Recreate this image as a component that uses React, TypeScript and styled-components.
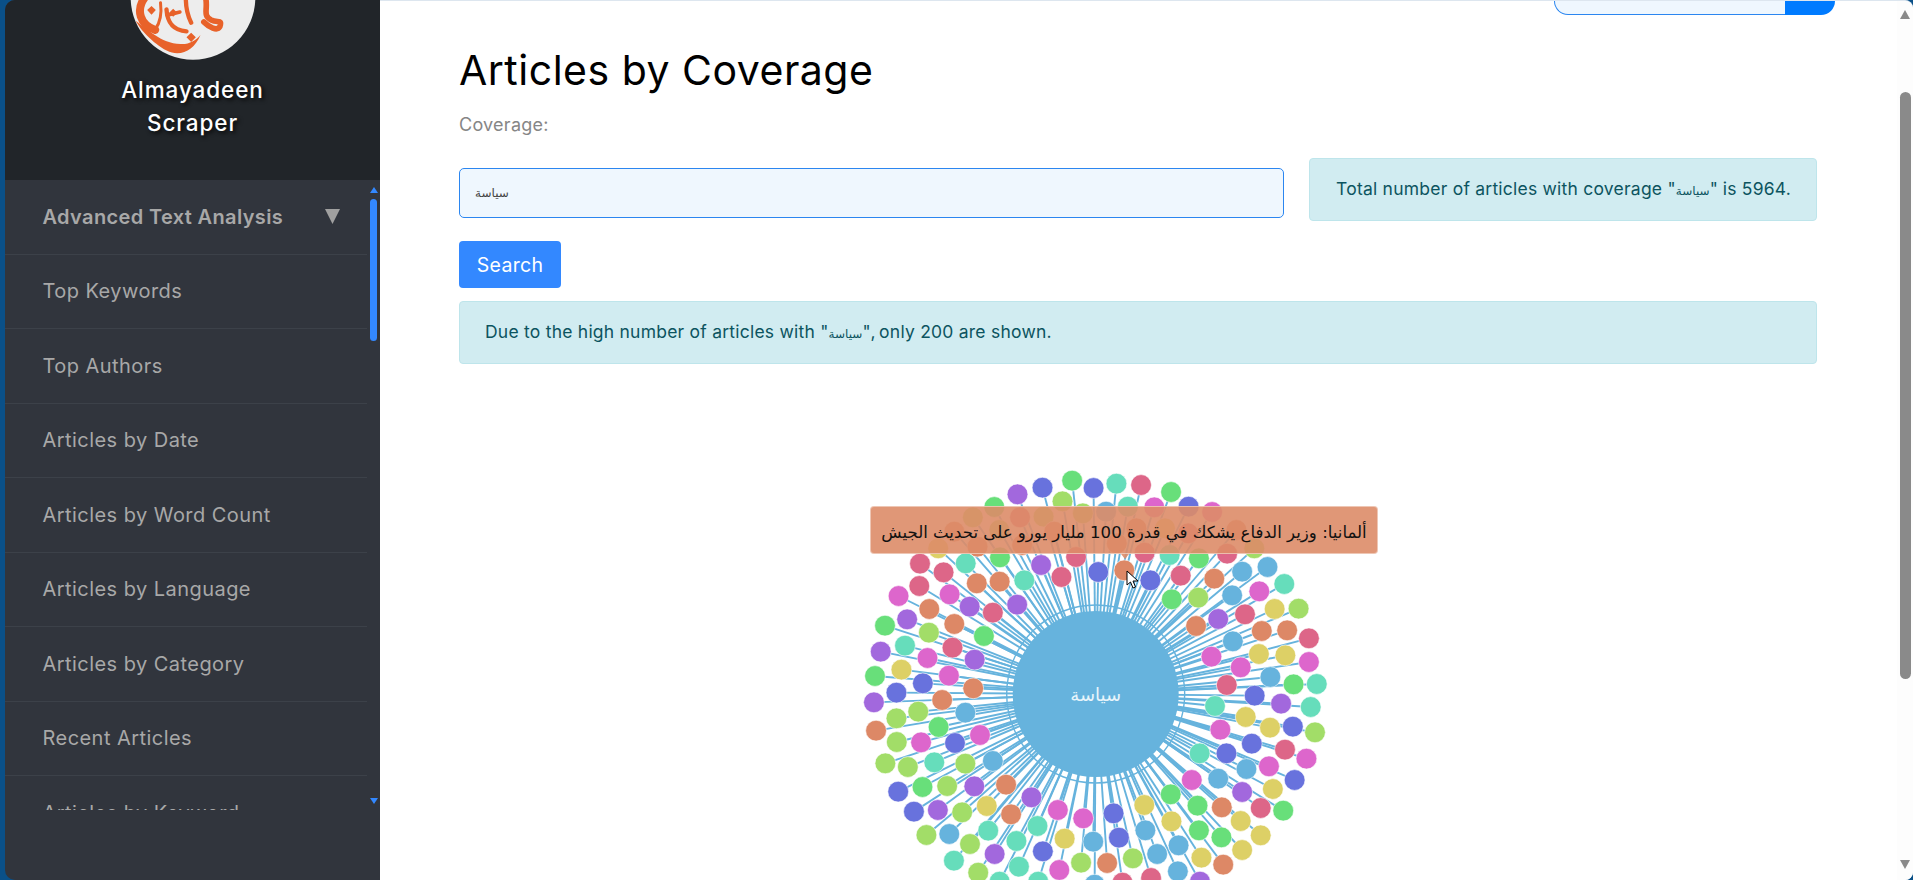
import React from "react";
import styled, { createGlobalStyle } from "styled-components";

const hues = {
  g: "#68df7a", b: "#6872dd", t: "#66ddbb", r: "#dd6688", p: "#a268dd",
  l: "#a2dd68", o: "#dd8866", y: "#ddd066", m: "#dd66cc", c: "#66b3dd",
};
type Hue = keyof typeof hues;

const raw = `650,62,g 567,83,b 497,103,p 710,84,b 774,71,t 843,75,r 927,96,g 623,124,l 806,140,t 880,142,m 976,140,b 1042,156,m 432,141,g
372,172,l 504,172,r 570,170,l 680,160,l 745,155,c 446,210,l 320,215,o 1110,210,o 830,205,o 910,205,y 975,220,r 600,215,o 275,265,y 385,260,o 510,255,o 775,250,o
853,278,r 661,291,r 923,285,t 1005,295,g 1084,281,r 1160,265,l 448,292,g 352,310,t 224,311,r 563,315,p 290,337,r 620,351,r 723,336,b 796,331,o 869,361,b 954,347,r 1048,356,o 1126,335,c 1197,321,c 1244,372,t
516,361,t 447,365,o 383,370,o 222,378,r 164,408,m 307,403,m 929,418,g 1003,413,l 1098,406,c 1174,394,m 250,447,o 363,440,p 496,434,p 428,458,r 1217,447,y 1284,446,l 1134,463,r 1059,477,p 997,498,o 1181,513,o 1252,511,o 1313,535,r
188,478,p 126,497,g 320,492,o 249,518,l 403,528,g 1100,544,c 182,557,t 114,575,p 315,563,r 245,594,m 377,599,p 1040,590,m 1122,622,m 1173,582,y 1247,586,y 1313,606,m 172,629,y 98,648,g 305,647,m 232,670,b 373,685,o 158,698,b 286,720,o 95,727,p
351,758,c 219,755,l 158,775,l 101,812,o 276,801,g 159,846,l 227,847,m 392,825,m 322,849,b 127,910,l 190,921,l 264,907,t 351,911,l 428,903,c 163,995,b 231,981,g 300,978,l 376,979,p 465,974,o 207,1055,b 274,1050,p 342,1057,l 411,1038,y 536,1012,p 479,1063,o
610,1050,m 681,1075,m 766,1060,b 852,1035,y 926,1003,g 928,1084,y 985,960,m 1001,1037,g 1069,1042,o 1059,956,c 1126,996,p 1122,1083,y 1178,1044,r 1241,1052,g 1178,1126,y 1126,1170,y 1068,1132,g 1005,1111,g 855,1111,c 781,1133,b 709,1145,c 629,1136,y 553,1098,t 494,1143,t 415,1112,t 306,1122,c 242,1125,l 364,1152,l 433,1182,p 319,1202,t 568,1174,b 501,1220,t 387,1238,l 447,1265,t 555,1265,t 614,1230,m 675,1208,l 748,1209,o 820,1195,l 888,1182,c 948,1156,c 1012,1193,y 1073,1214,o 946,1234,c 1008,1265,p 871,1254,r 791,1268,r 713,1274,c
1083,675,r 1205,651,c 1270,673,g 1335,672,t 1161,707,b 1235,731,p 1318,741,t 1050,738,t 1136,771,y 1204,803,y 1268,800,b 1330,817,l 1065,809,m 1153,851,b 1246,869,r 1306,896,m 1007,880,t 1082,880,b 1138,927,c 1201,919,m 1273,960,b 1212,987,y`;

const nodes = raw.split(/\s+/).map((s) => {
  const [x, y, h] = s.split(",");
  return { x: +x / 2.8, y: +y / 3, color: hues[h as Hue] };
});
const cx = 255.7;
const cy = 234;

const menu = ["Top Keywords", "Top Authors", "Articles by Date", "Articles by Word Count", "Articles by Language", "Articles by Category", "Recent Articles", "Articles by Keyword"];

const Global = createGlobalStyle`
  html, body { margin: 0; height: 100%; overflow: hidden; background: #0a5088; }
  #root { height: 100%; }
  * { box-sizing: border-box; }
`;
const Frame = styled.div`
  display: flex; height: 880px; width: 1913px; padding-left: 5px;
  background: #0a5088; font-family: Inter, "DejaVu Sans", sans-serif; overflow: hidden;
`;
const Sidebar = styled.aside`
  width: 375px; flex: none; display: flex; flex-direction: column;
  background: #31353d; border-radius: 10px 0 0 10px; overflow: hidden;
`;
const Brand = styled.header`
  height: 180px; flex: none; background: #212529; display: flex; flex-direction: column; align-items: center;
`;
const Logo = styled.svg`
  width: 150px; height: 60px; flex: none; display: block;
`;
const BrandName = styled.h2`
  margin: 13px 0 0; color: #fff; font-size: 22.5px; line-height: 33px; font-weight: 500; letter-spacing: .9px;
  text-align: center; text-shadow: 2px 2px 4px rgba(0,0,0,.9);
`;
const MenuArea = styled.div`
  flex: none; height: 630px; display: flex;
`;
const MenuList = styled.nav`
  width: 362px; flex: none; overflow: hidden; margin-right: 1.5px;
`;
const MenuItem = styled.div<{ $strong?: boolean }>`
  height: 74.5px; display: flex; align-items: center; justify-content: space-between;
  padding: 0 27px 0 37.5px; border-bottom: 1px solid #3c4149; color: #a8a8a8;
  font-size: 20px; font-weight: ${(p) => (p.$strong ? 600 : 400)}; letter-spacing: ${(p) => (p.$strong ? ".36px" : ".45px")};
`;
const Caret = styled.svg`
  width: 15px; height: 15px; margin-top: -1px;
`;
const Rail = styled.div`
  width: 10px; flex: none; display: flex; flex-direction: column; align-items: center; padding-top: 7px;
`;
const RailUp = styled.div`
  width: 0; height: 0; border: 4px solid transparent; border-top: 0; border-bottom: 6px solid #3388ff;
`;
const RailThumb = styled.div`
  width: 7px; height: 142px; margin-top: 6px; border-radius: 4px; background: #3388ff;
`;
const RailDown = styled.div`
  width: 0; height: 0; margin-top: 457px; border: 4px solid transparent; border-bottom: 0; border-top: 6px solid #3388ff;
`;
const Main = styled.main`
  flex: 1; min-width: 0; display: flex; background: #fff; border-top: 1px solid #dde6ef; border-radius: 0 8px 8px 0; overflow: hidden;
`;
const Content = styled.div`
  flex: 1; min-width: 0; display: flex; flex-direction: column;
`;
const TopBar = styled.div`
  height: 14px; flex: none; display: flex; justify-content: flex-end; padding-right: 62px;
`;
const TopInput = styled.div`
  width: 231px; background: #eff7fe; border: 1px solid #2b86f0; border-top: 0; border-right: 0; border-radius: 0 0 0 22px;
`;
const TopButton = styled.div`
  width: 50px; background: #007bff; border-radius: 0 0 24px 0;
`;
const Body = styled.div`
  padding: 0 80px 0 79px; display: flex; flex-direction: column;
`;
const Title = styled.h1`
  margin: 29px 0 0; font-size: 41px; line-height: 52px; font-weight: 400; color: #000; letter-spacing: .5px;
`;
const Label = styled.div`
  margin-top: 16px; font-size: 18px; line-height: 26px; color: #868686; letter-spacing: .25px;
`;
const SearchRow = styled.div`
  margin-top: 20px; display: flex; gap: 25px; height: 63px; align-items: flex-start;
`;
const Field = styled.div`
  margin-top: 10px; flex: 1; height: 50px; display: flex; align-items: center; padding-left: 15px;
  background: #eff7fe; border: 1px solid #2b86f0; border-radius: 5px; color: #444; font: 12px "DejaVu Sans", sans-serif;
`;
const Alert = styled.div`
  background: #d1ecf1; border: 1px solid #bee5eb; border-radius: 4px; color: #0c5460;
  font-size: 17.5px; letter-spacing: .23px; display: flex; align-items: center; padding-bottom: 2px;
`;
const TotalAlert = styled(Alert)`
  width: 508px; height: 63px; padding-left: 26px; flex: none;
`;
const NoticeAlert = styled(Alert)`
  height: 63px; padding-left: 25px; margin-top: 13px;
`;
const Ar = styled.span`
  font-family: "DejaVu Sans", sans-serif; font-size: 12px; letter-spacing: 0;
`;
const SearchButton = styled.button`
  margin-top: 20px; width: 102px; height: 47px; border: 0; border-radius: 4px; background: #3388ff; color: #fff;
  font: 400 19.5px Inter, sans-serif; letter-spacing: .3px;
`;
const Graph = styled.div`
  position: relative; width: 540px; height: 420px; margin: 96px 0 0 381px; flex: none;
`;
const GraphSvg = styled.svg`
  display: block; overflow: visible;
`;
const Tip = styled.div`
  position: absolute; left: 30px; top: 46px; width: 508px; height: 48px; border-radius: 4px; padding-top: 4px;
  background: rgba(221,140,104,.9); border: 1px solid rgba(255,255,255,.45); color: #111;
  display: flex; align-items: center; justify-content: center; white-space: nowrap;
  font: 16.6px "DejaVu Sans", sans-serif;
  &::after {
    content: ""; position: absolute; left: 250px; top: 47px; border: 4px solid transparent; border-bottom: 0;
    border-top: 5px solid rgba(221,140,104,.9);
  }
`;
const Cursor = styled.svg`
  position: absolute; left: 286px; top: 110px; width: 13px; height: 19px;
`;
const PageBar = styled.div`
  width: 16px; flex: none; background: #fdfdfd; display: flex; flex-direction: column; align-items: center; padding-top: 9px;
`;
const BarUp = styled.div`
  width: 0; height: 0; border: 5.5px solid transparent; border-top: 0; border-bottom: 9px solid #8a8a8a;
`;
const BarThumb = styled.div`
  width: 11px; height: 587px; margin-top: 73px; border-radius: 6px; background: #8a8a8a;
`;
const BarDown = styled.div`
  width: 0; height: 0; margin-top: 181px; border: 5.5px solid transparent; border-bottom: 0; border-top: 9px solid #8a8a8a;
`;

export default function App() {
  return (
    <Frame>
      <Global />
      <Sidebar>
        <Brand>
          <Logo viewBox="-7.5 0 450 180">
            <circle cx="217.5" cy="-7.5" r="187" fill="#ededed" />
            <g fill="none" stroke="#e8622a" strokeLinecap="round">
              <path d="M72 -6 C46 30 58 74 104 90" strokeWidth="24" />
              <path d="M104 88 C118 70 124 40 120 8" strokeWidth="9" />
              <path d="M138 28 C140 62 152 90 198 94" strokeWidth="13" />
              <path d="M140 46 L178 36" strokeWidth="11" />
              <path d="M196 -4 C196 30 204 52 212 68" strokeWidth="13" />
              <path d="M256 -4 C262 30 246 46 272 60 C292 70 306 56 298 80 C290 94 266 82 250 66" strokeWidth="17" />
            </g>
            <path d="M45 62 C80 85 120 130 180 132 C205 134 225 122 240 105 C225 140 200 160 170 160 C130 160 80 110 60 85 Z" fill="#e8622a" />
            <path d="M93 18 L106 30 L93 44 L80 30 Z M158 26 L170 38 L158 50 L146 38 Z M212 98 L226 112 L212 126 L198 112 Z" fill="#e8622a" />
          </Logo>
          <BrandName>Almayadeen<br />Scraper</BrandName>
        </Brand>
        <MenuArea>
          <MenuList>
            <MenuItem $strong>
              Advanced Text Analysis
              <Caret viewBox="0 0 15 15"><polygon points="0,0 15,0 7.5,15" fill="#a0a0a0" /></Caret>
            </MenuItem>
            {menu.map((m) => <MenuItem key={m}>{m}</MenuItem>)}
          </MenuList>
          <Rail>
            <RailUp />
            <RailThumb />
            <RailDown />
          </Rail>
        </MenuArea>
      </Sidebar>
      <Main>
        <Content>
          <TopBar><TopInput /><TopButton /></TopBar>
          <Body>
            <Title>Articles by Coverage</Title>
            <Label>Coverage:</Label>
            <SearchRow>
              <Field>سياسة</Field>
              <TotalAlert><span>Total number of articles with coverage "<Ar>سياسة</Ar>" is 5964.</span></TotalAlert>
            </SearchRow>
            <div><SearchButton>Search</SearchButton></div>
            <NoticeAlert><span>Due to the high number of articles with "<Ar>سياسة</Ar>", only 200 are shown.</span></NoticeAlert>
            <Graph>
              <GraphSvg width="540" height="420" viewBox="0 0 540 420">
                {nodes.map((n, i) => (
                  <line key={i} x1={cx} y1={cy} x2={n.x} y2={n.y} stroke="#66b3dd" strokeWidth="1.9" />
                ))}
                <circle cx={cx} cy={cy} r="89" fill="none" stroke="#66b3dd" strokeWidth="1.4" />
                <circle cx={cx} cy={cy} r="83" fill="#66b3dd" />
                <text x={cx} y={cy + 7} textAnchor="middle" fill="#e8f5fb" fontFamily="'DejaVu Sans', sans-serif" fontSize="18">سياسة</text>
                {nodes.map((n, i) => (
                  <circle key={i} cx={n.x} cy={n.y} r="10.4" fill={n.color} stroke="#fff" strokeOpacity=".6" strokeWidth="1" />
                ))}
              </GraphSvg>
              <Tip dir="rtl">ألمانيا: وزير الدفاع يشكك في قدرة 100 مليار يورو على تحديث الجيش</Tip>
              <Cursor viewBox="0 0 13 19">
                <path d="M1 1 L1 15 L4.5 12 L7 18 L9.5 17 L7 11 L12 11 Z" fill="#fff" stroke="#000" strokeWidth="1" />
              </Cursor>
            </Graph>
          </Body>
        </Content>
        <PageBar>
          <BarUp />
          <BarThumb />
          <BarDown />
        </PageBar>
      </Main>
    </Frame>
  );
}
